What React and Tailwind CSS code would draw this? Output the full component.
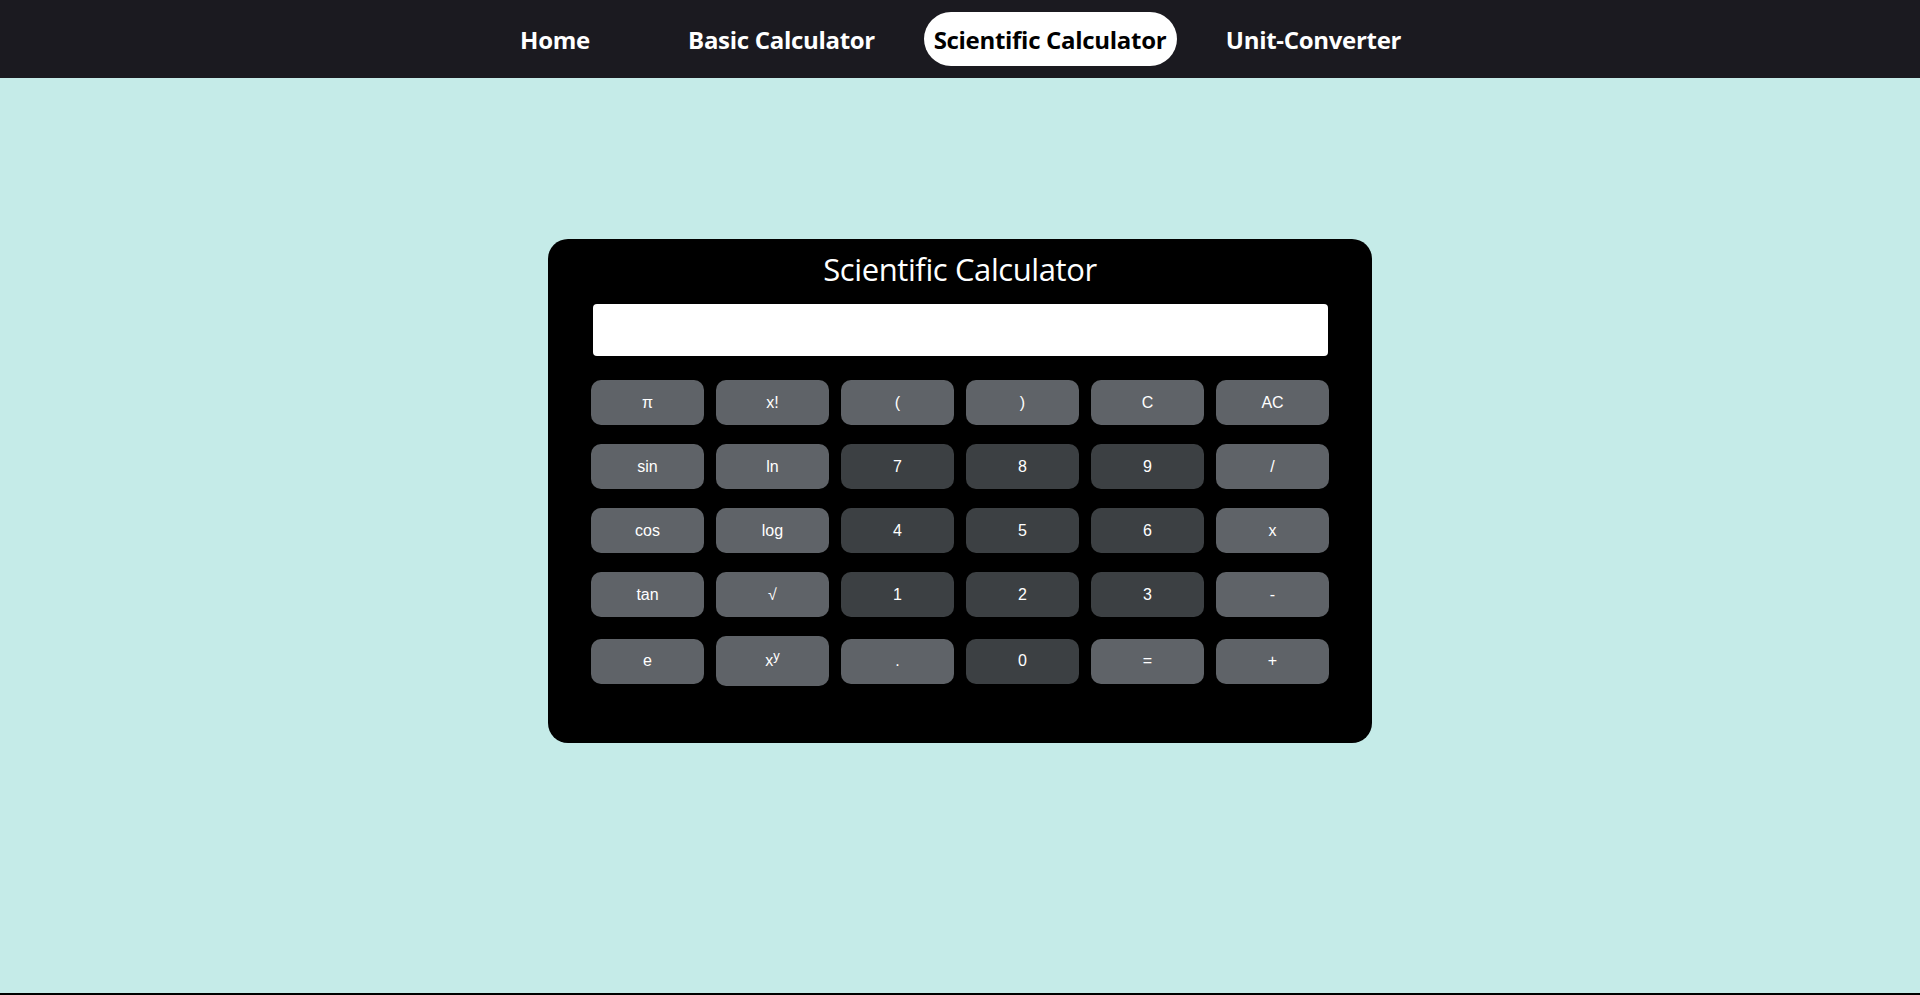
import React, { useState } from 'react';

const NAV = [
  { id: 'home', label: 'Home', w: 'w-[91px] mr-[79px]' },
  { id: 'basic', label: 'Basic Calculator', w: 'w-[204px] mr-[40px]' },
  { id: 'sci', label: 'Scientific Calculator', w: 'w-[253px] mr-[40px]' },
  { id: 'unit', label: 'Unit-Converter', w: 'w-[194px]' },
];

// light = #5f6368, dark = #3c4043
const ROWS = [
  [['π', 'l'], ['x!', 'l'], ['(', 'l'], [')', 'l'], ['C', 'l'], ['AC', 'l']],
  [['sin', 'l'], ['ln', 'l'], ['7', 'd'], ['8', 'd'], ['9', 'd'], ['/', 'l']],
  [['cos', 'l'], ['log', 'l'], ['4', 'd'], ['5', 'd'], ['6', 'd'], ['x', 'l']],
  [['tan', 'l'], ['√', 'l'], ['1', 'd'], ['2', 'd'], ['3', 'd'], ['-', 'l']],
  [['e', 'l'], ['pow', 'l'], ['.', 'l'], ['0', 'd'], ['=', 'l'], ['+', 'l']],
];

const App = () => {
  const [active, setActive] = useState('sci');
  const [value, setValue] = useState('');

  const press = (k) => {
    if (k === 'AC') return setValue('');
    if (k === 'C') return setValue(v => v.slice(0, -1));
    if (k === '=') return;
    setValue(v => v + (k === 'pow' ? '^' : k));
  };

  return (
    <div className="min-h-screen flex flex-col bg-[#c5ebe8] font-['Open_Sans',sans-serif]">
      {/* Navbar */}
      <nav className="h-[78px] bg-[#1b1a20] flex items-center justify-center">
        {NAV.map(item => (
          <button
            key={item.id}
            onClick={() => setActive(item.id)}
            className={`${item.w} h-[54px] pt-[2px] rounded-[27px] flex items-center justify-center text-[24px] font-bold tracking-[-0.3px] ${
              active === item.id ? 'bg-white text-black' : 'text-white'
            }`}
          >
            {item.label}
          </button>
        ))}
      </nav>

      {/* Main */}
      <main className="flex-1 flex justify-center">
        <div className="mt-[161px] w-[824px] h-[504px] bg-black rounded-[20px] px-[43px] pt-[10px]">
          <h2 className="text-center text-white text-[31px] leading-[41px] font-normal tracking-[-0.4px]">
            Scientific Calculator
          </h2>

          <input
            value={value}
            readOnly
            className="block mt-[14px] mx-[2px] w-[735px] h-[52px] bg-white rounded-[4px] outline-none px-3 text-2xl text-right"
          />

          <div className="mt-[24px] flex flex-col gap-[19px]">
            {ROWS.map((row, i) => (
              <div key={i} className="flex items-center gap-[12px]">
                {row.map(([k, tone]) => (
                  <button
                    key={k}
                    onClick={() => press(k)}
                    className={`w-[113px] ${k === 'pow' ? 'h-[50px]' : 'h-[45px]'} rounded-[10px] text-white text-[16px] font-['Liberation_Sans',Arial,sans-serif] flex items-center justify-center ${
                      tone === 'd' ? 'bg-[#3c4043]' : 'bg-[#5f6368]'
                    }`}
                  >
                    {k === 'pow' ? (
                      <span>x<sup className="text-[13px]">y</sup></span>
                    ) : k}
                  </button>
                ))}
              </div>
            ))}
          </div>
        </div>
      </main>

      <div className="h-[2px] bg-black" />
    </div>
  );
};

export default App;
